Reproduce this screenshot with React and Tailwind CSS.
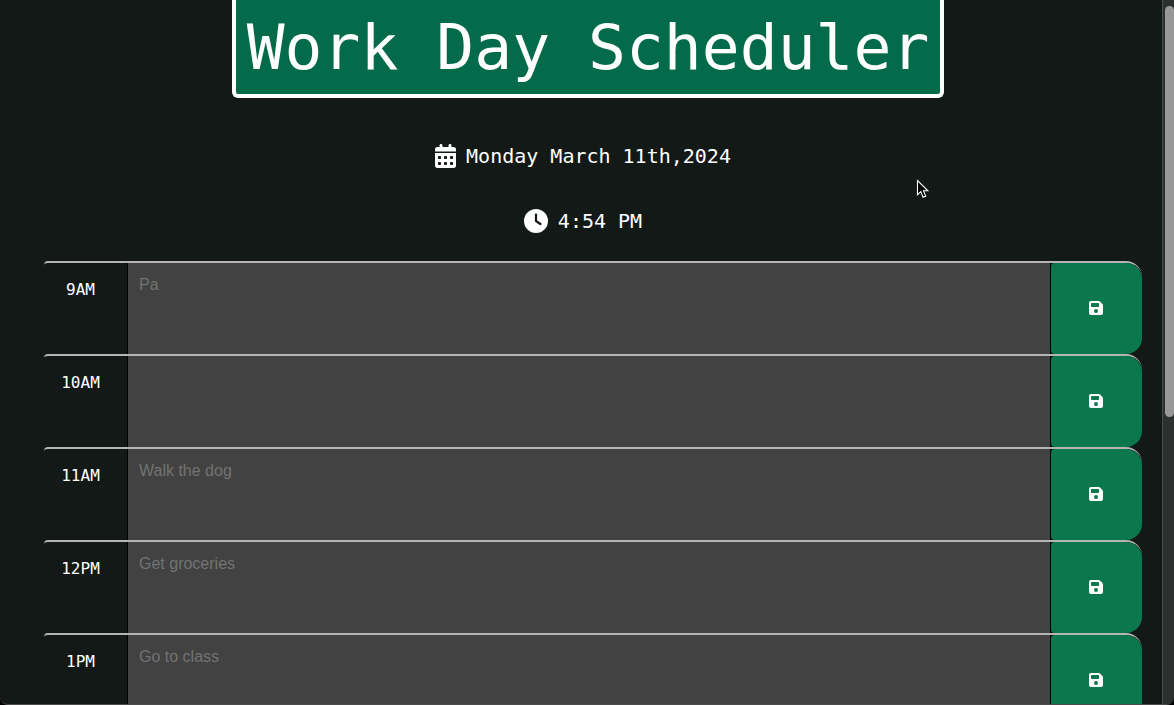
import { FaCalendarDays, FaClock, FaFloppyDisk } from "react-icons/fa6";

const blocks = [
  { hour: "9AM", text: "Pa" },
  { hour: "10AM", text: "" },
  { hour: "11AM", text: "Walk the dog" },
  { hour: "12PM", text: "Get groceries" },
  { hour: "1PM", text: "Go to class" },
];

function TimeBlock({ hour, text }) {
  const id = `event-${hour}`;
  return (
    <div className="flex h-[93px] rounded-l-sm rounded-r-2xl border-t-2 border-[#b4b5b4]">
      <label htmlFor={id} className="w-[83px] shrink-0 pr-2.5 pt-[15px] text-center text-base leading-6">
        {hour}
      </label>
      <textarea
        id={id}
        defaultValue={text}
        className="block min-w-0 flex-1 resize-none border-x border-black bg-[#414241] px-[11px] py-2.5 font-['Liberation_Sans',Arial,sans-serif] text-base leading-6 text-[#727372] outline-none"
      />
      <button
        type="button"
        aria-label={`Save ${hour}`}
        className="flex w-[91px] shrink-0 items-center justify-center rounded-l-sm rounded-r-2xl bg-[#0a784c] pb-0.5 pr-0.5 text-white"
      >
        <FaFloppyDisk className="size-4" />
      </button>
    </div>
  );
}

export default function App() {
  return (
    <div className="h-screen bg-black">
      <div className="relative flex h-full overflow-hidden rounded-b-lg border-b border-[#4a4b4a] bg-[#131917] font-['DejaVu_Sans_Mono','Liberation_Mono',monospace] text-white">
        <main className="min-w-0 flex-1">
          <header className="flex flex-col items-center pl-3.5">
            <h1 className="whitespace-nowrap rounded-b-md border-4 border-t-0 border-white bg-[#036b4a] px-[11px] pb-1.5 pt-2 text-[63px] leading-20">
              Work Day Scheduler
            </h1>
            <p className="mt-11 flex items-center gap-2.5 pr-2.5 text-xl leading-7">
              <FaCalendarDays className="h-6 w-[21px]" />
              Monday March 11th,2024
            </p>
            <p className="mt-[37px] flex items-center gap-2.5 pr-2.5 text-xl leading-7">
              <FaClock className="size-6" />
              4:54 PM
            </p>
          </header>
          <section className="ml-11 mr-5 mt-[26px]">
            {blocks.map((block) => (
              <TimeBlock key={block.hour} {...block} />
            ))}
          </section>
        </main>
        <div className="w-3 shrink-0 border-l border-[#4b4d4c] bg-[#2e3030] pl-0.5 pt-1.5">
          <div className="h-[411px] rounded-full bg-[#979897]" />
        </div>
        <svg
          className="absolute left-[916px] top-[179px] h-5 w-[14px]"
          viewBox="0 0 14 20"
          fill="#000"
          stroke="#fff"
          strokeWidth="1.1"
          aria-hidden="true"
        >
          <path d="M1.5 1.5v14.2l3.3-3.1 2.3 5.6 2.6-1.1-2.3-5.3h4.5z" />
        </svg>
      </div>
    </div>
  );
}
